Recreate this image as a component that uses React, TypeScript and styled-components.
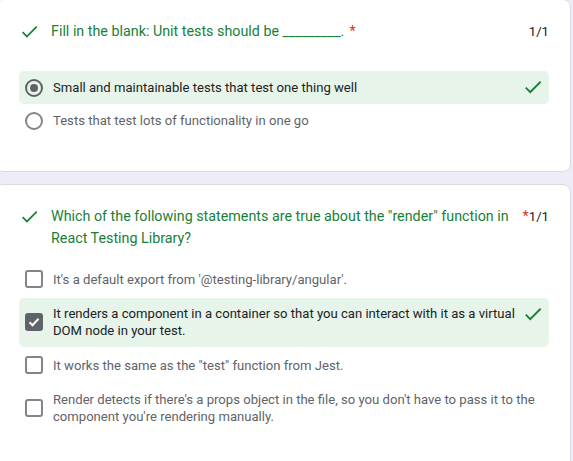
import React from "react";
import styled, { createGlobalStyle } from "styled-components";

const GlobalStyle = createGlobalStyle`
  html, body {
    margin: 0;
    padding: 0;
    background: #f0ebf8;
    overflow: hidden;
  }
  body {
    font-family: Roboto, "Liberation Sans", Arial, sans-serif;
    -webkit-font-smoothing: antialiased;
  }
`;

const Page = styled.div`
  width: 573px;
  height: 461px;
  background: #f0ebf8;
  overflow: hidden;
`;

const Stack = styled.div`
  display: flex;
  flex-direction: column;
  gap: 12px;
  margin: -1px 2px 0 -5px;
`;

const Card = styled.section`
  background: #fff;
  border: 1px solid #dadce0;
  border-radius: 8px;
  padding: 20px 21px 34px 23px;
`;

const TitleRow = styled.div`
  display: flex;
  align-items: flex-start;
`;

const TitleIcon = styled.svg`
  flex: 0 0 21px;
  width: 21px;
  height: 21px;
  margin-top: 1px;
  margin-right: 11px;
  fill: #188038;
`;

const TitleText = styled.div`
  flex: 0 1 auto;
  font-size: 14.3px;
  line-height: 22px;
  color: #188038;
`;

const Required = styled.span`
  flex: 0 0 auto;
  font-size: 14.3px;
  line-height: 22px;
  color: #d93025;
  padding-left: 5px;
`;

const Points = styled.div`
  flex: 0 0 auto;
  margin-left: auto;
  font-size: 13.2px;
  line-height: 24px;
  color: #202124;
`;

const Options = styled.div<{ $top: number; $gap: number }>`
  display: flex;
  flex-direction: column;
  gap: ${(p) => p.$gap}px;
  margin-top: ${(p) => p.$top}px;
`;

const OptionRow = styled.div<{ $correct?: boolean }>`
  display: flex;
  align-items: center;
  gap: 10px;
  padding: 7.5px 5px 7.5px 6px;
  border-radius: 5px;
  background: ${(p) => (p.$correct ? "#e6f4ea" : "transparent")};
`;

const Radio = styled.span<{ $checked?: boolean }>`
  flex: 0 0 18px;
  box-sizing: border-box;
  width: 18px;
  height: 18px;
  border-radius: 50%;
  border: 2px solid ${(p) => (p.$checked ? "#5f6368" : "#80868b")};
  display: flex;
  align-items: center;
  justify-content: center;
  &::after {
    content: "";
    display: ${(p) => (p.$checked ? "block" : "none")};
    width: 8px;
    height: 8px;
    border-radius: 50%;
    background: #5f6368;
  }
`;

const Box = styled.span<{ $checked?: boolean }>`
  flex: 0 0 18px;
  box-sizing: border-box;
  width: 18px;
  height: 18px;
  border-radius: 3px;
  border: 2px solid ${(p) => (p.$checked ? "#5f6368" : "#80868b")};
  background: ${(p) => (p.$checked ? "#5f6368" : "#fff")};
  display: flex;
  align-items: center;
  justify-content: center;
`;

const BoxTick = styled.svg`
  width: 14px;
  height: 14px;
  fill: none;
  stroke: #fff;
  stroke-width: 2;
`;

const OptionText = styled.div<{ $selected?: boolean }>`
  flex: 1 1 auto;
  font-size: 13.1px;
  line-height: 17px;
  color: ${(p) => (p.$selected ? "#202124" : "#5f6368")};
`;

const CorrectIcon = styled.svg`
  flex: 0 0 22px;
  width: 22px;
  height: 22px;
  align-self: flex-start;
  margin: -2.5px 0 -2.5px -8px;
  fill: #188038;
`;

const CheckPath = () => (
  <path d="M9 16.17L4.83 12l-1.42 1.41L9 19 21 7l-1.41-1.41z" />
);

type Opt = { text: string; selected?: boolean; correct?: boolean };

const Title = ({ text, points }: { text: string; points: string }) => (
  <TitleRow>
    <TitleIcon viewBox="0 0 24 24">
      <CheckPath />
    </TitleIcon>
    <TitleText>{text}</TitleText>
    <Required>*</Required>
    <Points>{points}</Points>
  </TitleRow>
);

const Option = ({ opt, kind }: { opt: Opt; kind: "radio" | "box" }) => (
  <OptionRow $correct={opt.correct}>
    {kind === "radio" ? (
      <Radio $checked={opt.selected} />
    ) : (
      <Box $checked={opt.selected}>
        {opt.selected && (
          <BoxTick viewBox="0 0 14 14">
            <path d="M2.5 7.2l3 3 6-6.4" />
          </BoxTick>
        )}
      </Box>
    )}
    <OptionText $selected={opt.selected}>{opt.text}</OptionText>
    {opt.correct && (
      <CorrectIcon viewBox="0 0 24 24">
        <CheckPath />
      </CorrectIcon>
    )}
  </OptionRow>
);

const q1: Opt[] = [
  { text: "Small and maintainable tests that test one thing well", selected: true, correct: true },
  { text: "Tests that test lots of functionality in one go" },
];

const q2: Opt[] = [
  { text: "It's a default export from '@testing-library/angular'." },
  {
    text: "It renders a component in a container so that you can interact with it as a virtual DOM node in your test.",
    selected: true,
    correct: true,
  },
  { text: 'It works the same as the "test" function from Jest.' },
  {
    text: "Render detects if there's a props object in the file, so you don't have to pass it to the component you're rendering manually.",
  },
];

export default function App() {
  return (
    <Page>
      <GlobalStyle />
      <Stack>
        <Card>
          <Title text="Fill in the blank: Unit tests should be _________." points="1/1" />
          <Options $top={27} $gap={0}>
            {q1.map((o) => (
              <Option key={o.text} opt={o} kind="radio" />
            ))}
          </Options>
        </Card>
        <Card>
          <Title
            text={'Which of the following statements are true about the "render" function in React Testing Library?'}
            points="1/1"
          />
          <Options $top={13.5} $gap={2}>
            {q2.map((o) => (
              <Option key={o.text} opt={o} kind="box" />
            ))}
          </Options>
        </Card>
      </Stack>
    </Page>
  );
}
